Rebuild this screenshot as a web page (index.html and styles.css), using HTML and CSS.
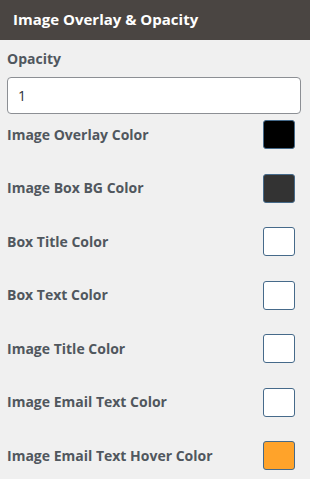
FILE: index.html
```html
<!DOCTYPE html>
<html lang="en">
<head>
    <meta charset="UTF-8">
    <title>Image Overlay &amp; Opacity</title>
    <link rel="stylesheet" href="styles.css">
</head>
<body>
    <div class="panel-head">Image Overlay &amp; Opacity</div>

    <div class="panel-body">
        <label class="field-label" for="opacity">Opacity</label>
        <input id="opacity" class="text-input" type="text" value="1">

        <div class="color-list">
            <div class="color-row">
                <span class="field-label">Image Overlay Color</span>
                <span class="swatch" style="background-color: #000000;"></span>
            </div>
            <div class="color-row">
                <span class="field-label">Image Box BG Color</span>
                <span class="swatch" style="background-color: #333333;"></span>
            </div>
            <div class="color-row">
                <span class="field-label">Box Title Color</span>
                <span class="swatch" style="background-color: #ffffff;"></span>
            </div>
            <div class="color-row">
                <span class="field-label">Box Text Color</span>
                <span class="swatch" style="background-color: #ffffff;"></span>
            </div>
            <div class="color-row">
                <span class="field-label">Image Title Color</span>
                <span class="swatch" style="background-color: #ffffff;"></span>
            </div>
            <div class="color-row">
                <span class="field-label">Image Email Text Color</span>
                <span class="swatch" style="background-color: #ffffff;"></span>
            </div>
            <div class="color-row">
                <span class="field-label">Image Email Text Hover Color</span>
                <span class="swatch" style="background-color: #ffa32a;"></span>
            </div>
        </div>
    </div>
</body>
</html>
```

FILE: styles.css
```css
body {
    margin: 0;
    background-color: #f0f0f0;
    font-family: "Open Sans", "Noto Sans", sans-serif;
    color: #50575e;
}
.panel-head {
    height: 40px;
    line-height: 38px;
    padding: 0 13px;
    background-color: #4a4542;
    color: #ffffff;
    font-size: 15px;
    font-weight: 700;
}
.panel-body {
    padding: 10px 15px 0 7px;
}
.field-label {
    display: block;
    font-size: 14px;
    font-weight: 700;
    line-height: 18px;
    color: #50575e;
}
.text-input {
    display: block;
    box-sizing: border-box;
    width: 294px;
    height: 37px;
    margin-top: 9px;
    padding: 0 10px;
    border: 1px solid #8c8f94;
    border-radius: 4px;
    background-color: #ffffff;
    font-family: inherit;
    font-size: 14px;
    color: #2c3338;
}
.color-list {
    display: flex;
    flex-direction: column;
    gap: 24.5px;
    margin-top: 6px;
}
.color-row {
    display: flex;
    align-items: center;
    justify-content: space-between;
}
.swatch {
    display: block;
    box-sizing: border-box;
    width: 32px;
    height: 29px;
    border: 1px solid #466a8a;
    border-radius: 3px;
}
```
